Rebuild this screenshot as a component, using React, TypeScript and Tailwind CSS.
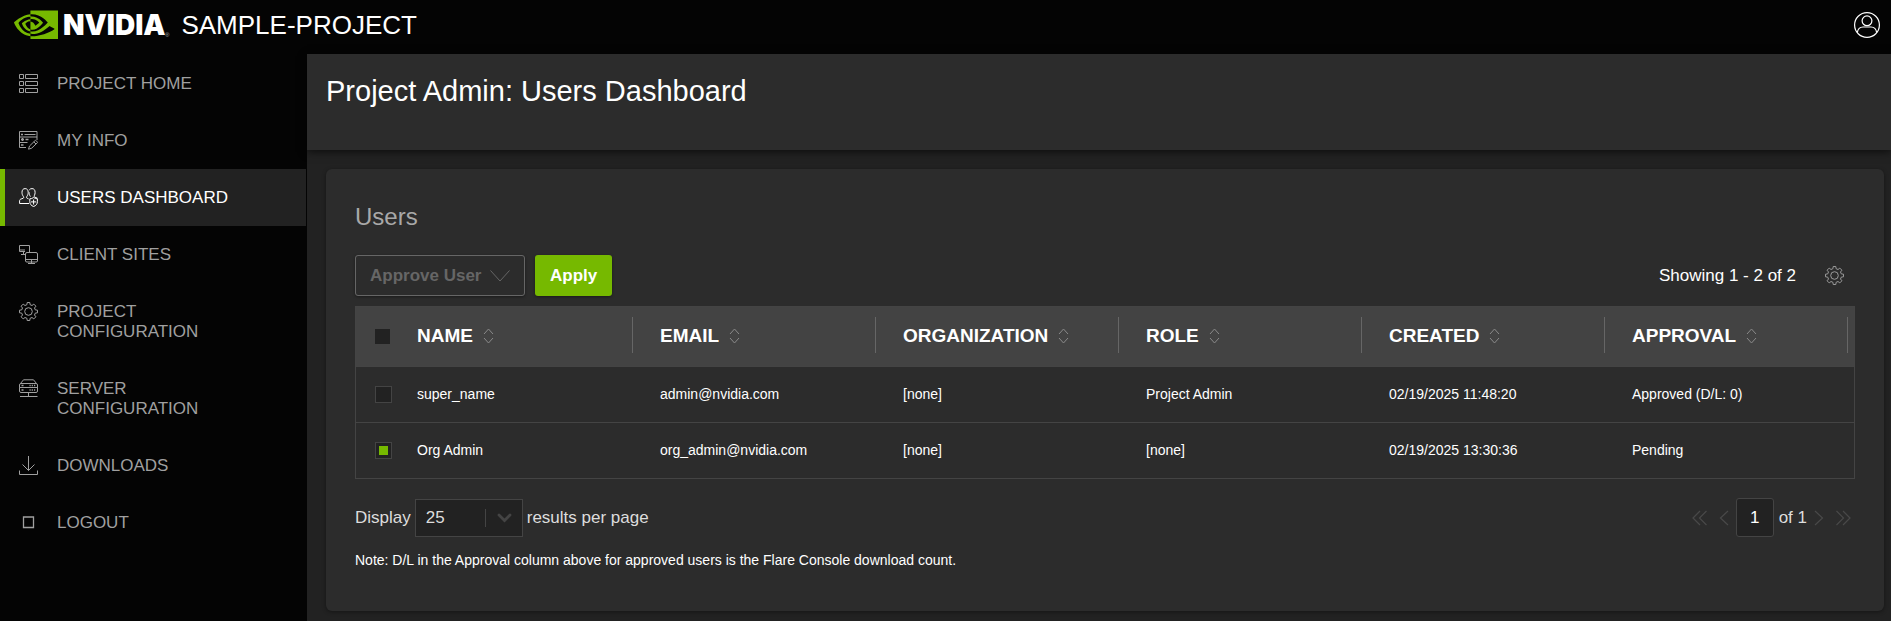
import React, { useState } from "react";
import { SiNvidia } from "react-icons/si";

const svgProps = {
  viewBox: "0 0 19 19",
  fill: "none",
  stroke: "currentColor",
  strokeWidth: 1,
  "aria-hidden": true,
  className: "block h-[19px] w-[19px] shrink-0",
} as const;

function HomeIcon() {
  return (
    <svg {...svgProps}>
      <path d="M.5.5h4v4h-4zM6.500.5h12v4h-12zM.5 7.500h4v4h-4zM6.500 7.500h12v4h-12zM.5 14.500h4v4h-4zM6.500 14.500h12v4h-12z" />
    </svg>
  );
}

function InfoIcon() {
  return (
    <svg {...svgProps}>
      <path d="M7 16.500H.5V.5h17.500v5.500H.5M18 6v3M.5 11.500h8M5.500 3.500h11" />
      <path d="M2 3.500h2M2 8.500h3M3.500 7v3M6.500 8.500h3M2 14h2.500" strokeWidth="1.500" />
      <path d="M9.500 18.200l1-3.200 6-5.800 2.200 2.200-6 5.800zM14.800 10.800l2.200 2.200" />
    </svg>
  );
}

function UsersIcon() {
  return (
    <svg {...svgProps}>
      <path d="M10 15.500H.6v-2.700c0-1 .6-1.500 1.500-1.800l2-.7c.7-.3.8-1.100.2-1.900C3.300 7 3 5.800 3 4.300 3 2 4.100.6 6.100.6S9.200 2 9.200 4.300c0 1.500-.3 2.700-1.300 4.100-.5.8-.5 1.600.3 1.900l1.300.5" />
      <path d="M10.300 1.900C10.900 1 11.800.6 13 .6c2 0 3.100 1.400 3.100 3.700 0 1.300-.2 2.300-.8 3.400-.3.700 0 1.200.6 1.500l2.500 1M11.400 8.600c-.9-1.300-1.300-2.600-1.200-4.300" />
      <path d="M14.600 9.500c1.200.9 2.500 1.300 3.800 1.300v2.900c0 2.300-1.400 4-3.800 4.800-2.400-.8-3.800-2.500-3.800-4.800v-2.900c1.300 0 2.600-.4 3.800-1.300zM14.600 11.500v5M12 13.900h5.200" />
    </svg>
  );
}

function SitesIcon() {
  return (
    <svg {...svgProps}>
      <path d="M6 6.500H.5v-6h10V7M.5 5h5.500M4.500 6.500v3M2 9.500h4" />
      <path d="M8 7.500h9q1.500 0 1.500 1.500v7q0 1-1.500 1H8q-1.500 0-1.500-1V9q0-1.500 1.500-1.500zM6.500 14.500h12M12.500 15v3.500M9 18.500h7" />
    </svg>
  );
}

function GearIcon() {
  return (
    <svg {...svgProps}>
      <path d="M8.200.5h2.600l.3 2.200 1.900.8 1.800-1.400 2.100 2.100-1.400 1.800.8 1.900 2.200.3v2.600l-2.200.3-.8 1.900 1.400 1.800-2.100 2.100-1.800-1.400-1.900.8-.3 2.200H8.200l-.3-2.200-1.900-.8-1.800 1.400-2.100-2.100L3.500 13l-.8-1.900-2.200-.3V8.200l2.200-.3.800-1.900-1.400-1.800 2.100-2.100L6 3.500l1.900-.8z" />
      <circle cx="9.500" cy="9.500" r="3.800" />
    </svg>
  );
}

function ServerIcon() {
  return (
    <svg {...svgProps}>
      <path d="M1.500 4.500L4.500.8h10l3 3.700M2 4.500h15q1.500 0 1.500 1.500v2.500h-18V6q0-1.500 1.500-1.500zM.5 8.500h18V12q0 1.500-1.500 1.500H2Q.5 13.500.5 12zM9.500 13.500v4M1 17.500h17.500" />
      <path d="M2.500 6.500h2M10.500 6.500h1.200M12.700 6.500h1.200M15 6.500h1.200M2.500 11h2M10.500 11h1.200M12.700 11h1.200M15 11h1.200" strokeWidth="1.500" />
    </svg>
  );
}

function DownloadIcon() {
  return (
    <svg {...svgProps}>
      <path d="M9.500 0v14.500M3.500 8.500l6 6 6-6M.5 14.500v4h18v-4" />
    </svg>
  );
}

function LogoutIcon() {
  return (
    <svg {...svgProps}>
      <path d="M4.500 4h10v10.500h-10z" strokeWidth="1.300" />
    </svg>
  );
}

function SortIcon() {
  return (
    <svg viewBox="0 0 11 16" fill="none" stroke="currentColor" aria-hidden="true" className="h-4 w-[11px] text-[#8a8a8a]">
      <path d="M1 6l4.500-5L10 6M1 10l4.500 5 4.500-5" />
    </svg>
  );
}

function ProfileIcon() {
  return (
    <svg viewBox="0 0 26 26" fill="none" stroke="currentColor" strokeWidth="1.200" aria-hidden="true" className="h-[26px] w-[26px]">
      <circle cx="13" cy="13" r="12.400" />
      <circle cx="13" cy="8.800" r="4.900" />
      <path d="M3.300 20.600c.6-3.800 2.800-5.600 5.700-5.600h8c2.900 0 5.100 1.800 5.700 5.600" />
    </svg>
  );
}

function PageArrow({ label, d, double = false }: { label: string; d: string; double?: boolean }) {
  return (
    <button type="button" aria-label={label} disabled className={double ? "w-[15px] text-[#494949]" : "w-2.5 text-[#494949]"}>
      <svg viewBox={double ? "0 0 15 16" : "0 0 10 16"} fill="none" stroke="currentColor" strokeWidth="1.200" aria-hidden="true" className="h-4 w-full">
        <path d={d} />
      </svg>
    </button>
  );
}

const nav = [
  { label: "PROJECT HOME", Icon: HomeIcon },
  { label: "MY INFO", Icon: InfoIcon },
  { label: "USERS DASHBOARD", Icon: UsersIcon, active: true },
  { label: "CLIENT SITES", Icon: SitesIcon },
  { label: "PROJECT CONFIGURATION", Icon: GearIcon },
  { label: "SERVER CONFIGURATION", Icon: ServerIcon },
  { label: "DOWNLOADS", Icon: DownloadIcon },
  { label: "LOGOUT", Icon: LogoutIcon },
];

const columns = ["NAME", "EMAIL", "ORGANIZATION", "ROLE", "CREATED", "APPROVAL"];

const rows = [
  ["super_name", "admin@nvidia.com", "[none]", "Project Admin", "02/19/2025 11:48:20", "Approved (D/L: 0)"],
  ["Org Admin", "org_admin@nvidia.com", "[none]", "[none]", "02/19/2025 13:30:36", "Pending"],
];

export default function App() {
  const [selected, setSelected] = useState([false, true]);
  const allSelected = selected.every(Boolean);

  return (
    <div className="flex min-h-screen flex-col bg-[#040404] font-['Liberation_Sans',Arial,sans-serif] text-[17px] leading-5 text-white">
      <header className="flex h-[54px] items-center justify-between pr-[11px] pb-[5px] pl-3.5">
        <div className="flex items-center">
          <a href="#" className="flex items-center" aria-label="NVIDIA home">
            <span className="flex h-[29px] w-11 items-center justify-center overflow-hidden">
              <SiNvidia aria-hidden="true" className="h-11 w-11 shrink-0 text-[#76b900]" />
            </span>
            <span className="ml-[5px] w-[102px] font-['Inter',sans-serif] text-[28px] leading-8 font-black">NVIDIA</span>
            <span className="self-end text-[6px] leading-3 text-[#aaaaaa]">®</span>
          </a>
          <span className="ml-3 text-[26px] leading-8">SAMPLE-PROJECT</span>
        </div>
        <button type="button" aria-label="Account">
          <ProfileIcon />
        </button>
      </header>

      <div className="flex flex-1">
        <nav className="w-[307px] shrink-0 pt-px pr-px">
          {nav.map(({ label, Icon, active }) => (
            <a
              key={label}
              href="#"
              aria-current={active ? "page" : undefined}
              className={
                active
                  ? "flex gap-[19px] border-l-[5px] border-[#76b900] bg-[#222222] pt-[19px] pr-[90px] pb-[18px] pl-3.5 whitespace-nowrap text-white"
                  : "flex gap-[19px] border-l-[5px] border-transparent pt-[19px] pr-[90px] pb-[18px] pl-3.5 text-[#a0a0a0]"
              }
            >
              <Icon />
              <span>{label}</span>
            </a>
          ))}
        </nav>

        <main className="min-w-0 flex-1 bg-[#222222]">
          <div className="h-24 bg-[#2c2c2c] px-[19px] pt-[19px] shadow-[0_2px_8px_rgba(0,0,0,0.6)]">
            <h1 className="text-[29px] leading-9">Project Admin: Users Dashboard</h1>
          </div>

          <section className="mt-[19px] mr-[7px] mb-2.5 ml-[19px] rounded-md bg-[#2c2c2c] px-[29px] pt-8 pb-[41px] shadow-[0_1px_4px_rgba(0,0,0,0.4)]">
            <h2 className="text-2xl leading-8 text-[#a8a8a8]">Users</h2>

            <div className="mt-[22px] flex items-center justify-between">
              <div className="flex gap-2.5">
                <div className="relative">
                  <select
                    aria-label="Action"
                    disabled
                    className="h-[41px] w-[170px] appearance-none rounded-[3px] border border-[#666666] bg-transparent pl-3.5 font-bold text-[#666666] shadow-[0_1px_3px_rgba(0,0,0,0.4)] disabled:opacity-100"
                  >
                    <option>Approve User</option>
                  </select>
                  <svg viewBox="0 0 20 12" fill="none" stroke="#666666" aria-hidden="true" className="pointer-events-none absolute top-[15px] right-[15px] h-3 w-5">
                    <path d="M.5.5L10 11 19.500.5" />
                  </svg>
                </div>
                <button type="button" className="h-[41px] rounded-[3px] bg-[#76b900] px-[15px] font-bold shadow-[0_1px_3px_rgba(0,0,0,0.4)]">
                  Apply
                </button>
              </div>
              <div className="flex items-center gap-[29px] pr-[11px]">
                <span>Showing 1 - 2 of 2</span>
                <button type="button" aria-label="Table settings" className="text-[#9a9a9a]">
                  <GearIcon />
                </button>
              </div>
            </div>

            <div className="mt-2.5 border border-[#444444]">
              <table className="w-full table-fixed text-left">
                <colgroup>
                  <col className="w-[34px]" />
                  <col span={6} />
                  <col className="w-1.5" />
                </colgroup>
                <thead>
                  <tr className="h-[59px] bg-[#434343] text-[19px]">
                    <th className="pl-[19px]">
                      <input
                        type="checkbox"
                        aria-label="Select all users"
                        checked={allSelected}
                        onChange={() => setSelected(selected.map(() => !allSelected))}
                        className="block h-[15px] w-[15px] appearance-none bg-[#222222] checked:bg-[#76b900]"
                      />
                    </th>
                    {columns.map((name) => (
                      <th key={name} className="pb-0.5">
                        <span className="flex h-9 items-center gap-2.5 border-r border-[#666666] pt-0.5 pl-[27px]">
                          {name}
                          <SortIcon />
                        </span>
                      </th>
                    ))}
                    <th />
                  </tr>
                </thead>
                <tbody className="text-sm">
                  {rows.map((row, i) => (
                    <tr key={row[0]} className="h-14 border-t border-[#444444]">
                      <td className="pl-[19px]">
                        <input
                          type="checkbox"
                          aria-label={`Select ${row[0]}`}
                          checked={selected[i]}
                          onChange={() => setSelected(selected.map((s, j) => (i === j ? !s : s)))}
                          className="block h-[17px] w-[17px] appearance-none border border-[#444444] bg-[#222222] p-[3px] checked:bg-[linear-gradient(#76b900,#76b900)] checked:bg-origin-content checked:bg-no-repeat"
                        />
                      </td>
                      {row.map((value, j) => (
                        <td key={columns[j]} className="pl-[27px]">
                          {value}
                        </td>
                      ))}
                      <td />
                    </tr>
                  ))}
                </tbody>
              </table>
            </div>

            <div className="mt-[19px] flex items-center justify-between text-[#dddddd]">
              <div className="flex items-center gap-1">
                <label htmlFor="page-size">Display</label>
                <div className="relative">
                  <select id="page-size" defaultValue="25" className="h-[38px] w-[108px] appearance-none border border-[#444444] bg-[#222222] pl-2.5">
                    <option>10</option>
                    <option>25</option>
                    <option>50</option>
                  </select>
                  <span className="pointer-events-none absolute top-2.5 right-[11px] flex items-center gap-[11px]">
                    <span className="h-[18px] w-px bg-[#444444]" />
                    <svg viewBox="0 0 15 10" fill="none" stroke="#444444" strokeWidth="2.800" strokeLinecap="round" aria-hidden="true" className="h-2.5 w-[15px]">
                      <path d="M2 2l5.500 5.500L13 2" />
                    </svg>
                  </span>
                </div>
                <span>results per page</span>
              </div>
              <div className="flex items-center pr-1">
                <PageArrow double label="First page" d="M8 1L1 8l7 7M14.500 1l-7 7 7 7" />
                <span className="w-3" />
                <PageArrow label="Previous page" d="M9 1L1.500 8 9 15" />
                <input
                  aria-label="Page"
                  defaultValue="1"
                  className="mr-[5px] ml-[7px] h-[39px] w-[38px] rounded-[3px] border border-[#444444] bg-[#222222] text-center text-white"
                />
                <span className="mr-[7px]">of 1</span>
                <PageArrow label="Next page" d="M1 1l7.500 7L1 15" />
                <span className="w-3" />
                <PageArrow double label="Last page" d="M.5 1l7 7-7 7M7 1l7 7-7 7" />
              </div>
            </div>

            <p className="mt-[13px] text-sm leading-5">
              Note: D/L in the Approval column above for approved users is the Flare Console download count.
            </p>
          </section>
        </main>
      </div>
    </div>
  );
}
